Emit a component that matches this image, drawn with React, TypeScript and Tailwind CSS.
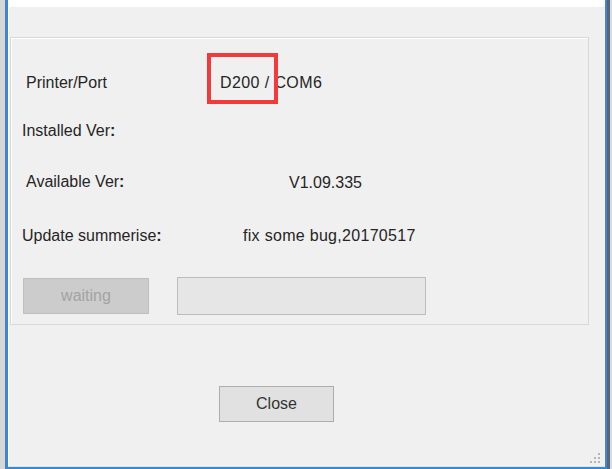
import React from "react";

function Grip() {
  const dots: [number, number][] = [
    [8, 0],
    [4, 4],
    [8, 4],
    [0, 8],
    [4, 8],
    [8, 8],
  ];
  return (
    <svg width="11" height="11" viewBox="0 0 11 11">
      {dots.map(([x, y], i) => (
        <rect key={i} x={x} y={y} width="2" height="2" fill="#b5b5b5" />
      ))}
    </svg>
  );
}

export default function App() {
  return (
    <div className="relative flex h-[469px] w-[612px] overflow-hidden bg-[#dadada] font-['Liberation_Sans',Arial,sans-serif] text-[16px] leading-4 text-[#252525]">
      <div className="w-[5px] shrink-0 bg-[#d7d7d7]" />
      <div className="flex w-[602px] shrink-0 flex-col border-b-[2px] border-l-[3px] border-r-[2px] border-[#3f86cc] bg-[#f0f0f0]">
        <div className="h-[7px] shrink-0 bg-white" />
        <div className="flex flex-1 flex-col border-l border-white border-b border-b-[#d4e6f6]">
          <div className="ml-[1px] mt-[30px] flex h-[288px] w-[579px] flex-col border border-[#d9d9d9] shadow-[inset_1px_1px_0_#ffffff]">
            <div className="mt-[37px] flex h-4">
              <div className="w-[209px] pl-[15px]">Printer/Port</div>
              <div className="tracking-[0.4px]">D200 / COM6</div>
            </div>
            <div className="mt-[32px] flex h-4">
              <div className="w-[209px] pl-[11px]">
                Installed Ver<span className="font-bold">:</span>
              </div>
            </div>
            <div className="mt-[35px] flex h-4">
              <div className="w-[278px] pl-[15px]">
                Available Ver<span className="font-bold">:</span>
              </div>
              <div className="mt-[1px]">V1.09.335</div>
            </div>
            <div className="mt-[38px] flex h-4">
              <div className="w-[232px] pl-[11px]">
                Update summerise<span className="font-bold">:</span>
              </div>
              <div className="tracking-[0.3px]">fix some bug,20170517</div>
            </div>
            <div className="ml-[12px] mt-[34px] flex h-[37px] items-start gap-[28px]">
              <div className="flex h-[36px] w-[126px] items-center justify-center border border-[#bfbfbf] bg-[#cccccc] text-[#a3a3a3]">
                waiting
              </div>
              <div className="mt-[-1px] h-[38px] w-[249px] border border-[#bcbcbc] bg-[#e6e6e6]" />
            </div>
          </div>
          <div className="ml-[210px] mt-[61px] flex h-[36px] w-[115px] items-center justify-center border border-[#adadad] bg-[#e1e1e1] text-[#333]">
            Close
          </div>
          <div className="mt-auto flex justify-end pb-[2px] pr-[4px]">
            <Grip />
          </div>
        </div>
      </div>
      <div className="w-[3px] shrink-0 bg-[#55667c]" />
      <div className="pointer-events-none absolute left-[207px] top-[53px] h-[51px] w-[71px] border-[4px] border-[#f33a3a]" />
    </div>
  );
}
